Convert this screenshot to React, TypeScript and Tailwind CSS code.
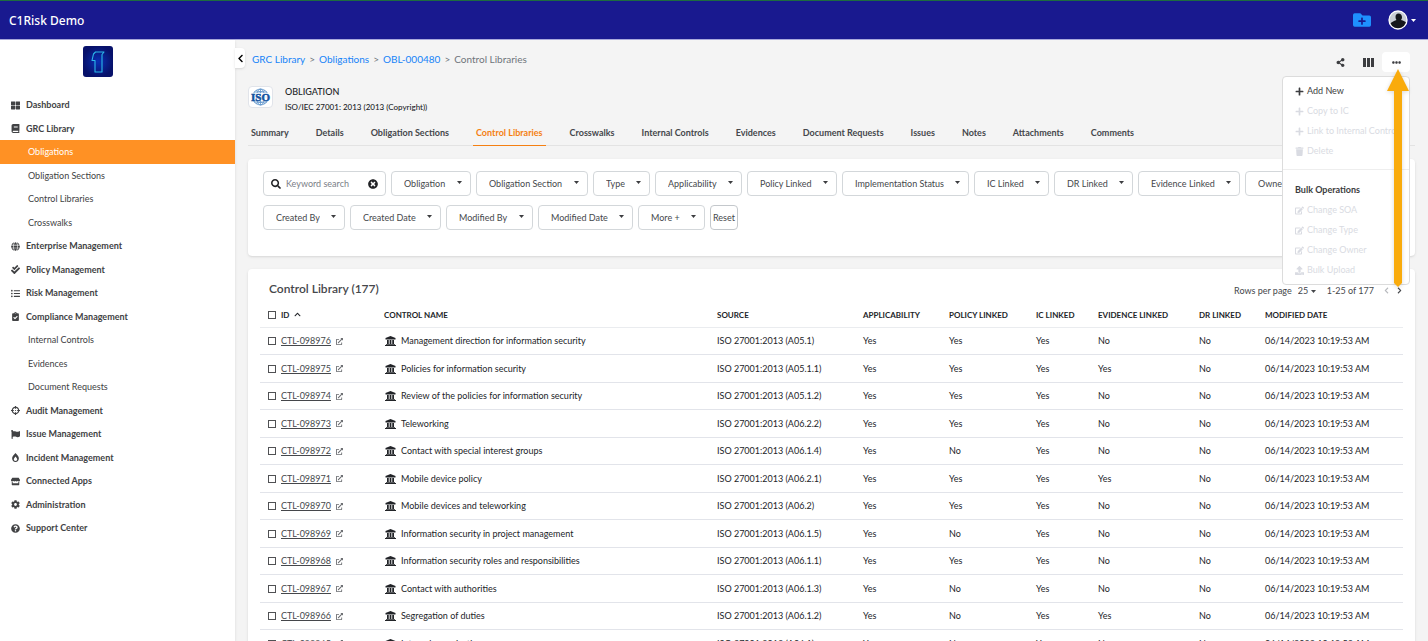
import React, { useState } from 'react';
import {
  FaBook, FaCheckDouble, FaChevronLeft, FaChevronRight, FaChevronUp, FaClipboardCheck, FaCog, FaCrosshairs,
  FaEdit, FaEllipsisH, FaExternalLinkAlt, FaFlag, FaFolderPlus, FaGlobe, FaListUl, FaPlus, FaQuestionCircle,
  FaSearch, FaShareAlt, FaStore, FaThLarge, FaTimesCircle, FaTrash, FaUpload, FaBurn
} from 'react-icons/fa';
import type { IconType } from 'react-icons';

interface NavItem {
  label: string;
  icon?: IconType;
  active?: boolean;
}

interface Control {
  id: string;
  name: string;
  source: string;
  flags: string[];
}

const NAV: NavItem[] = [
  { label: 'Dashboard', icon: FaThLarge },
  { label: 'GRC Library', icon: FaBook },
  { label: 'Obligations', active: true },
  { label: 'Obligation Sections' },
  { label: 'Control Libraries' },
  { label: 'Crosswalks' },
  { label: 'Enterprise Management', icon: FaGlobe },
  { label: 'Policy Management', icon: FaCheckDouble },
  { label: 'Risk Management', icon: FaListUl },
  { label: 'Compliance Management', icon: FaClipboardCheck },
  { label: 'Internal Controls' },
  { label: 'Evidences' },
  { label: 'Document Requests' },
  { label: 'Audit Management', icon: FaCrosshairs },
  { label: 'Issue Management', icon: FaFlag },
  { label: 'Incident Management', icon: FaBurn },
  { label: 'Connected Apps', icon: FaStore },
  { label: 'Administration', icon: FaCog },
  { label: 'Support Center', icon: FaQuestionCircle },
];

const TABS = [
  'Summary', 'Details', 'Obligation Sections', 'Control Libraries', 'Crosswalks', 'Internal Controls',
  'Evidences', 'Document Requests', 'Issues', 'Notes', 'Attachments', 'Comments',
];

const FILTERS = [
  'Obligation', 'Obligation Section', 'Type', 'Applicability', 'Policy Linked', 'Implementation Status', 'IC Linked',
  'DR Linked', 'Evidence Linked', 'Owner', 'Created By', 'Created Date', 'Modified By', 'Modified Date', 'More +',
];

// flags: applicability, policy linked, IC linked, evidence linked, DR linked
const CONTROLS: Control[] = [
  { id: 'CTL-098976', name: 'Management direction for information security', source: 'A05.1', flags: ['Yes', 'Yes', 'Yes', 'No', 'No'] },
  { id: 'CTL-098975', name: 'Policies for information security', source: 'A05.1.1', flags: ['Yes', 'Yes', 'Yes', 'Yes', 'No'] },
  { id: 'CTL-098974', name: 'Review of the policies for information security', source: 'A05.1.2', flags: ['Yes', 'Yes', 'Yes', 'No', 'No'] },
  { id: 'CTL-098973', name: 'Teleworking', source: 'A06.2.2', flags: ['Yes', 'Yes', 'Yes', 'No', 'No'] },
  { id: 'CTL-098972', name: 'Contact with special interest groups', source: 'A06.1.4', flags: ['Yes', 'No', 'Yes', 'No', 'No'] },
  { id: 'CTL-098971', name: 'Mobile device policy', source: 'A06.2.1', flags: ['Yes', 'Yes', 'Yes', 'Yes', 'No'] },
  { id: 'CTL-098970', name: 'Mobile devices and teleworking', source: 'A06.2', flags: ['Yes', 'Yes', 'Yes', 'No', 'No'] },
  { id: 'CTL-098969', name: 'Information security in project management', source: 'A06.1.5', flags: ['Yes', 'No', 'Yes', 'No', 'No'] },
  { id: 'CTL-098968', name: 'Information security roles and responsibilities', source: 'A06.1.1', flags: ['Yes', 'Yes', 'Yes', 'No', 'No'] },
  { id: 'CTL-098967', name: 'Contact with authorities', source: 'A06.1.3', flags: ['Yes', 'No', 'Yes', 'No', 'No'] },
  { id: 'CTL-098966', name: 'Segregation of duties', source: 'A06.1.2', flags: ['Yes', 'No', 'Yes', 'Yes', 'No'] },
  { id: 'CTL-098965', name: 'Internal organization', source: 'A06.1', flags: ['Yes', 'No', 'Yes', 'No', 'No'] },
];

const Caret = ({ className = '' }: { className?: string }) => (
  <svg viewBox="0 0 10 6" className={`h-[3px] w-[5px] ${className}`} fill="currentColor" aria-hidden="true">
    <path d="M0 0h10L5 6z" />
  </svg>
);

const BankIcon = () => (
  <svg viewBox="0 0 22 20" className="h-[10px] w-[11px] shrink-0" fill="currentColor" aria-hidden="true">
    <path d="M11 0l10 4v3H1V4zM4 8h3.500v8H4zM9.250 8h3.500v8h-3.500zM14.500 8H18v8h-3.500zM2 16h18v1.500H2zM0 18h22v2H0z" />
  </svg>
);

const ColumnsIcon = () => (
  <svg viewBox="0 0 11 9" className="h-[9px] w-[11px]" fill="currentColor" aria-hidden="true">
    <path d="M0 0h3v9H0zM4 0h3v9H4zM8 0h3v9H8z" />
  </svg>
);

const BrandLogo = () => (
  <svg viewBox="0 0 30 31" className="h-[31px] w-[30px]" role="img" aria-label="C1Risk">
    <defs>
      <radialGradient id="brand">
        <stop offset="0" stopColor="#0a2fb4" />
        <stop offset="1" stopColor="#07116a" />
      </radialGradient>
    </defs>
    <rect width="30" height="31" rx="3" fill="url(#brand)" />
    <path d="M12.500 6H21l-2 2.500V26h-7V14.500H9L10.500 8z" fill="none" stroke="#2bb8ea" strokeWidth="1.100" strokeLinejoin="round" />
  </svg>
);

const IsoLogo = () => (
  <svg viewBox="1 1 23 20" className="h-5 w-[23px]" role="img" aria-label="ISO">
    <g fill="none" stroke="#5f95cc" strokeWidth=".8">
      <circle cx="12.500" cy="11" r="8" />
      <ellipse cx="12.500" cy="11" rx="4" ry="8" />
      <path d="M12.500 3v16M6 6h13M6 16h13M4.500 11h16M8 4.500c3 1.500 6 1.500 9 0M8 17.500c3-1.500 6-1.500 9 0" />
    </g>
    <rect x="2" y="7" width="21" height="8" fill="#fff" opacity=".75" />
    <text x="12.500" y="14.500" textAnchor="middle" fontFamily="Liberation Serif, serif" fontWeight="700" fontSize="11" fill="#14539f" stroke="#14539f" strokeWidth=".5">ISO</text>
  </svg>
);

const Avatar = () => (
  <svg viewBox="0 0 20 20" className="size-5" aria-hidden="true">
    <circle cx="10" cy="10" r="9" fill="#c9ced6" />
    <path d="M10.500 3.500c-2 0-3 1.500-3 3.500 0 1.200.4 2.200 1 3-2.500 1-5.500 2-6.500 4A9 9 0 0 0 18.500 13c-1-1.500-3-2.300-5.500-3 .7-.8 1-1.700 1-2.700 0-2.300-1.500-3.800-3.500-3.800z" fill="#15171c" />
    <circle cx="10" cy="10" r="9" fill="none" stroke="#fff" strokeWidth="1.300" />
  </svg>
);

const Header = () => (
  <header className="flex h-10 shrink-0 items-center justify-between border-t border-b border-t-[#1d6b3f] border-b-[#a9a9dc] bg-[#19198f] pr-3 pl-[9px] text-white">
    <span className="pt-0.5 font-['Noto_Sans',sans-serif] text-xs font-medium">C1Risk Demo</span>
    <div className="flex items-center gap-[17px]">
      <button aria-label="New folder" className="text-[#1e90ff]">
        <FaFolderPlus size={18} />
      </button>
      <button aria-label="Account" className="flex items-center gap-[3px]">
        <Avatar />
        <Caret />
      </button>
    </div>
  </header>
);

const Sidebar = () => (
  <aside className="flex w-[235px] shrink-0 flex-col bg-white shadow-sm">
    <div className="flex justify-center pt-[6px] pr-[39px] pb-4">
      <BrandLogo />
    </div>
    <ul className="text-[9px] text-[#414244]">
      {NAV.map(({ label, icon: Icon, active }) => (
        <li key={label} className="h-6 even:h-[23px]">
          <a
            href="#"
            className={`flex h-full items-center ${Icon ? 'gap-[6px] pl-[11px] font-bold' : 'pl-7'} ${active ? 'bg-[#ff9124] text-white' : ''}`}
          >
            {Icon && <Icon size={9} />}
            {label}
          </a>
        </li>
      ))}
    </ul>
  </aside>
);

const Toolbar = ({ open, onToggle }: { open: boolean; onToggle: () => void }) => (
  <div className="relative flex items-center text-[#3c3d40]">
    <button aria-label="Share" className="flex h-5 w-7 items-center justify-center">
      <FaShareAlt size={9} />
    </button>
    <button aria-label="Columns" className="flex h-5 w-7 items-center justify-center">
      <ColumnsIcon />
    </button>
    <button aria-label="More actions" onClick={onToggle} className="flex h-5 w-7 items-center justify-center rounded-sm bg-white">
      <FaEllipsisH size={9} />
    </button>
    {open && <ActionMenu />}
  </div>
);

const MenuItem = ({ icon: Icon, label, disabled }: { icon: IconType; label: string; disabled?: boolean }) => (
  <button disabled={disabled} className="flex h-5 w-full items-center gap-[3px] pl-3 whitespace-nowrap disabled:text-[#d9dbe2]">
    <Icon size={9} className="shrink-0" />
    {label}
  </button>
);

const ActionMenu = () => (
  <div className="absolute top-6 right-0 z-10 w-32 rounded-sm border border-[#dcdcdc] bg-white text-[9px] text-[#3c3d40]">
    <div className="overflow-hidden border-b border-[#eeeeee] pt-1 pb-2">
      <MenuItem icon={FaPlus} label="Add New" />
      <MenuItem icon={FaPlus} label="Copy to IC" disabled />
      <MenuItem icon={FaPlus} label="Link to Internal Control" disabled />
      <MenuItem icon={FaTrash} label="Delete" disabled />
    </div>
    <div className="pt-[10px] pb-1">
      <h3 className="h-5 pl-3 leading-5 font-bold">Bulk Operations</h3>
      <MenuItem icon={FaEdit} label="Change SOA" disabled />
      <MenuItem icon={FaEdit} label="Change Type" disabled />
      <MenuItem icon={FaEdit} label="Change Owner" disabled />
      <MenuItem icon={FaUpload} label="Bulk Upload" disabled />
    </div>
    <svg viewBox="0 0 26 222" className="pointer-events-none absolute -top-2 -right-0.5 h-[222px] w-[26px] drop-shadow-sm" aria-hidden="true">
      <path d="M13 0l11 22h-7v192l-4 4-4-4V22H2z" fill="#f9ab0c" />
    </svg>
  </div>
);

const FilterBar = () => {
  const [keyword, setKeyword] = useState('');

  return (
    <section className="mt-[13px] flex flex-wrap gap-x-[5px] gap-y-[9px] rounded-sm bg-white pt-3 pr-10 pb-[26px] pl-[15px] shadow-sm">
      <div className="flex h-[25px] w-[123px] items-center rounded-sm border border-[#d3d7da] px-[7px]">
        <FaSearch size={10} className="shrink-0 text-[#222326]" />
        <input
          aria-label="Keyword search"
          placeholder="Keyword search"
          value={keyword}
          onChange={e => setKeyword(e.target.value)}
          className="min-w-0 flex-1 px-[5px] text-[9px] outline-none placeholder:text-[#7b8087]"
        />
        <button aria-label="Clear keyword" onClick={() => setKeyword('')} className="text-[#222326]">
          <FaTimesCircle size={10} />
        </button>
      </div>
      {FILTERS.map(name => (
        <div key={name} className="relative">
          <select aria-label={name} className="block h-[25px] appearance-none rounded-sm border border-[#d3d7da] pr-6 pl-3 text-[9px] text-[#45474b]">
            <option>{name}</option>
          </select>
          <Caret className="pointer-events-none absolute top-[10px] right-[9px] text-[#3c3d40]" />
        </div>
      ))}
      <button className="h-[25px] rounded-sm border border-[#c4c8cc] px-[2px] text-[9px] text-[#45474b]">Reset</button>
    </section>
  );
};

const Checkbox = ({ label }: { label: string }) => (
  <input type="checkbox" aria-label={label} className="block size-2 shrink-0 appearance-none border border-[#505154] bg-white checked:bg-[#505154]" />
);

const ControlTable = () => (
  <table className="mt-[5px] w-full table-fixed text-left text-[9px] text-[#222428]">
    <colgroup>
      <col className="w-[124px]" />
      <col />
      <col className="w-[146px]" />
      <col className="w-[86px]" />
      <col className="w-[87px]" />
      <col className="w-[62px]" />
      <col className="w-[101px]" />
      <col className="w-[66px]" />
      <col className="w-[138px]" />
    </colgroup>
    <thead>
      <tr className="h-[25px] border-b border-[#eaecef] text-[8px]">
        <th className="pl-2">
          <span className="flex items-center gap-[5px]">
            <Checkbox label="Select all" />
            ID
            <FaChevronUp size={7} />
          </span>
        </th>
        <th>CONTROL NAME</th>
        <th>SOURCE</th>
        <th>APPLICABILITY</th>
        <th>POLICY LINKED</th>
        <th>IC LINKED</th>
        <th>EVIDENCE LINKED</th>
        <th>DR LINKED</th>
        <th>MODIFIED DATE</th>
      </tr>
    </thead>
    <tbody>
      {CONTROLS.map(c => (
        <tr key={c.id} className="h-[27px] border-b border-[#e2e4ea] even:h-7">
          <td className="pl-2">
            <span className="flex items-center gap-[5px]">
              <Checkbox label={`Select ${c.id}`} />
              <a href="#" className="text-[#45474b] underline underline-offset-1">{c.id}</a>
              <FaExternalLinkAlt size={7} className="text-[#6b6d71]" />
            </span>
          </td>
          <td>
            <span className="flex items-center gap-[5px] pl-[1px]">
              <BankIcon />
              {c.name}
            </span>
          </td>
          <td>ISO 27001:2013 ({c.source})</td>
          {c.flags.map((flag, i) => (
            <td key={i}>{flag}</td>
          ))}
          <td>06/14/2023 10:19:53 AM</td>
        </tr>
      ))}
    </tbody>
  </table>
);

const Pagination = () => (
  <div className="flex items-center pt-[3px] text-[9px] text-[#45474b]">
    <label htmlFor="page-size">Rows per page</label>
    <div className="relative ml-[6px]">
      <select id="page-size" className="block appearance-none pr-[7px]">
        <option>25</option>
      </select>
      <Caret className="pointer-events-none absolute top-[6px] right-0" />
    </div>
    <span className="ml-[11px]">1-25 of 177</span>
    <button aria-label="Previous page" className="ml-[9px] text-[#b7b9bd]">
      <FaChevronLeft size={7} />
    </button>
    <button aria-label="Next page" className="ml-[6px]">
      <FaChevronRight size={7} />
    </button>
  </div>
);

export default function App() {
  const [menuOpen, setMenuOpen] = useState(true);

  return (
    <div className="flex h-screen flex-col overflow-hidden bg-[#f4f4f4] font-[Lato,sans-serif]">
      <Header />
      <div className="flex min-h-0 flex-1">
        <Sidebar />
        <button aria-label="Collapse sidebar" className="mt-2 flex h-5 w-[10px] shrink-0 items-center justify-center rounded-r-sm bg-white shadow-sm">
          <FaChevronLeft size={9} />
        </button>
        <main className="min-w-0 flex-1 pr-[13px] pl-[3px]">
          <div className="flex items-start justify-between pt-3 pr-[5px]">
            <nav aria-label="Breadcrumb" className="flex h-[14px] items-center gap-1 pl-1 text-[10px] text-[#6f747b]">
              <a href="#" className="text-[#1683f8]">GRC Library</a>
              <span>&gt;</span>
              <a href="#" className="text-[#1683f8]">Obligations</a>
              <span>&gt;</span>
              <a href="#" className="text-[#1683f8]">OBL-000480</a>
              <span>&gt;</span>
              <span>Control Libraries</span>
            </nav>
            <Toolbar open={menuOpen} onToggle={() => setMenuOpen(!menuOpen)} />
          </div>
          <div className="mt-3 flex items-start gap-3">
            <div className="mt-[2px] rounded-sm border border-[#e1e4ea] bg-white">
              <IsoLogo />
            </div>
            <div className="text-[#222428]">
              <h1 className="text-[9px] leading-4 font-medium">OBLIGATION</h1>
              <p className="text-[8px] leading-[14px] font-medium">ISO/IEC 27001: 2013 (2013 (Copyright))</p>
            </div>
          </div>
          <nav aria-label="Obligation" className="mt-[7px] flex gap-[21px] border-b border-[#e3e3e3] text-[9px] font-bold text-[#45474b]">
            {TABS.map(tab => (
              <a
                key={tab}
                href="#"
                className={`-mb-px border-b px-[3px] py-[5px] leading-[14px] ${tab === 'Control Libraries' ? 'border-[#f58012] text-[#f58012]' : 'border-transparent'}`}
              >
                {tab}
              </a>
            ))}
          </nav>
          <FilterBar />
          <section className="mt-[13px] rounded-sm bg-white px-3 pt-3 shadow-sm">
            <div className="flex items-center justify-between pl-[9px]">
              <h2 className="text-xs font-semibold text-[#45474b]">Control Library (177)</h2>
              <Pagination />
            </div>
            <ControlTable />
          </section>
        </main>
      </div>
    </div>
  );
}
